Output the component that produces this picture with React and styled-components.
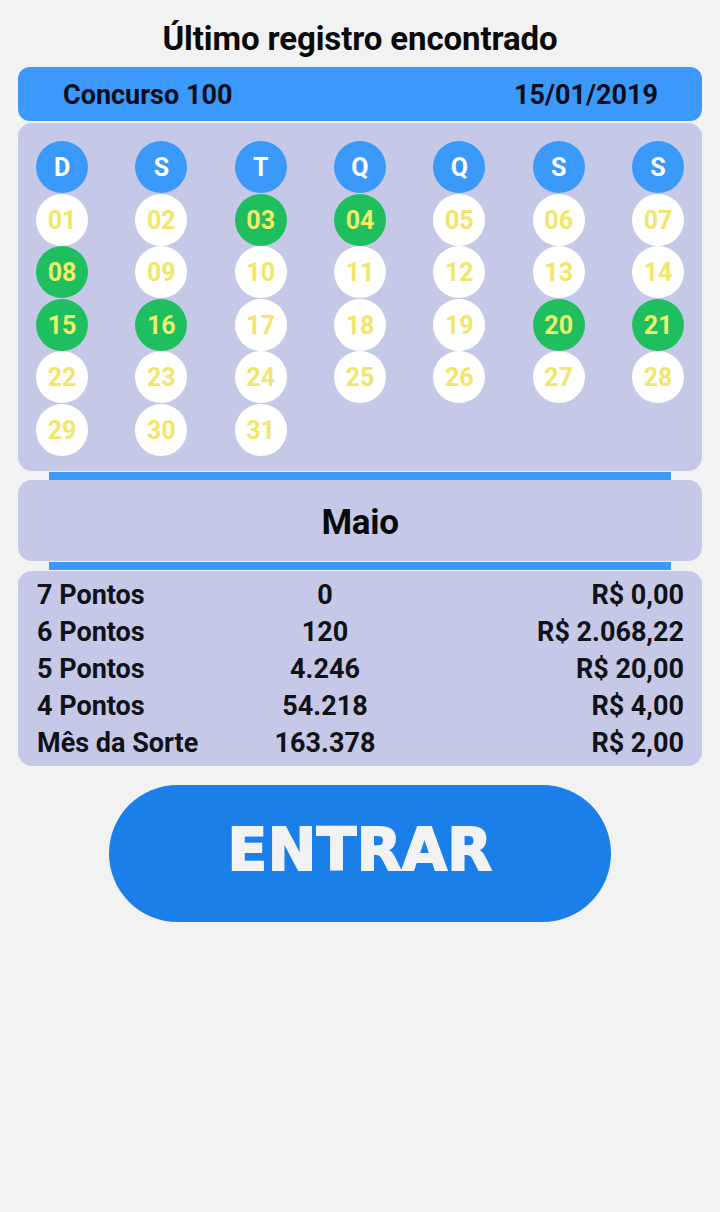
import React from 'react';
import styled, { createGlobalStyle } from 'styled-components';

const GlobalStyle = createGlobalStyle`
  html, body {
    margin: 0;
    padding: 0;
    background: #f2f2f2;
    font-family: Roboto, "Liberation Sans", sans-serif;
  }
`;

const weekDays = ['D', 'S', 'T', 'Q', 'Q', 'S', 'S'];
const drawn = [3, 4, 8, 15, 16, 20, 21];

const prizes = [
  { label: '7 Pontos', winners: '0', value: 'R$ 0,00' },
  { label: '6 Pontos', winners: '120', value: 'R$ 2.068,22' },
  { label: '5 Pontos', winners: '4.246', value: 'R$ 20,00' },
  { label: '4 Pontos', winners: '54.218', value: 'R$ 4,00' },
  { label: 'Mês da Sorte', winners: '163.378', value: 'R$ 2,00' },
];

const App = () => {
  const days = Array.from({ length: 31 }, (_, i) => i + 1);

  return (
    <StyledPage>
      <GlobalStyle />
      <Title>Último registro encontrado</Title>

      <HeaderBar>
        <span>Concurso 100</span>
        <span>15/01/2019</span>
      </HeaderBar>

      <Panel>
        <DayGrid>
          {weekDays.map((d, i) => (
            <Ball key={'w' + i} kind="week">{d}</Ball>
          ))}
          {days.map((n) => (
            <Ball key={n} kind={drawn.includes(n) ? 'hit' : 'day'}>
              {String(n).padStart(2, '0')}
            </Ball>
          ))}
        </DayGrid>
      </Panel>

      <Connector />
      <MonthPanel>Maio</MonthPanel>
      <Connector />

      <StatsPanel>
        {prizes.map((p) => (
          <StatRow key={p.label}>
            <span>{p.label}</span>
            <Winners>{p.winners}</Winners>
            <Value>{p.value}</Value>
          </StatRow>
        ))}
      </StatsPanel>

      <EnterButton>ENTRAR</EnterButton>
    </StyledPage>
  );
};

export default App;

const StyledPage = styled.div`
  width: 720px;
  min-height: 1212px;
  box-sizing: border-box;
  padding: 18px 18px 0;
  display: flex;
  flex-direction: column;
`;

const Title = styled.h1`
  margin: 0;
  height: 41px;
  line-height: 41px;
  text-align: center;
  font-size: 33px;
  font-weight: 700;
  color: #0a0a0a;
  letter-spacing: -0.1px;
`;

const HeaderBar = styled.div`
  margin-top: 8px;
  height: 54px;
  border-radius: 12px;
  background: #3a99fb;
  display: flex;
  align-items: center;
  justify-content: space-between;
  padding: 2px 44px 0 45px;
  box-sizing: border-box;
  font-size: 27px;
  font-weight: 700;
  color: #0d0d1a;
`;

const Panel = styled.div`
  margin-top: 2px;
  background: #c5c9e7;
  border-radius: 14px;
  padding: 18px 18px 15px;
`;

const DayGrid = styled.div`
  display: grid;
  grid-template-columns: repeat(7, 52px);
  grid-auto-rows: 52px;
  row-gap: 0.6px;
  justify-content: space-between;
`;

const Ball = styled.div`
  width: 52px;
  height: 52px;
  border-radius: 50%;
  display: flex;
  align-items: center;
  justify-content: center;
  padding-top: 1px;
  box-sizing: border-box;
  font-size: 25px;
  font-weight: 700;
  background: ${({ kind }) =>
    kind === 'week' ? '#3a99f9' : kind === 'hit' ? '#1fbf5f' : '#ffffff'};
  color: ${({ kind }) =>
    kind === 'week' ? '#ffffff' : kind === 'hit' ? '#eef06a' : '#f1e66a'};
`;

const Connector = styled.div`
  height: 8px;
  margin: 1px 31px 0;
  background: #3a99fb;
`;

const MonthPanel = styled.div`
  height: 81px;
  border-radius: 14px;
  background: #c5c9e7;
  display: flex;
  align-items: center;
  justify-content: center;
  padding-top: 4px;
  box-sizing: border-box;
  font-size: 35px;
  font-weight: 700;
  color: #0a0a0a;
  letter-spacing: -0.3px;
`;

const StatsPanel = styled.div`
  margin-top: 1px;
  border-radius: 14px;
  background: #c5c9e7;
  padding: 6px 18px 4px 19px;
`;

const StatRow = styled.div`
  display: grid;
  grid-template-columns: 200px 176px 1fr;
  height: 37px;
  line-height: 37px;
  font-size: 27px;
  font-weight: 700;
  color: #111118;
`;

const Winners = styled.span`
  text-align: center;
`;

const Value = styled.span`
  text-align: right;
`;

const EnterButton = styled.button`
  margin: 19px auto 0;
  width: 502px;
  height: 137px;
  border: none;
  border-radius: 69px;
  background: #1a7fe8;
  color: #f2f2f2;
  font-family: "DejaVu Sans", "Liberation Sans", sans-serif;
  font-size: 58px;
  font-weight: 700;
  letter-spacing: 0.5px;
  -webkit-text-stroke: 2px #f2f2f2;
  padding: 0 0 6px;
  cursor: pointer;
`;
